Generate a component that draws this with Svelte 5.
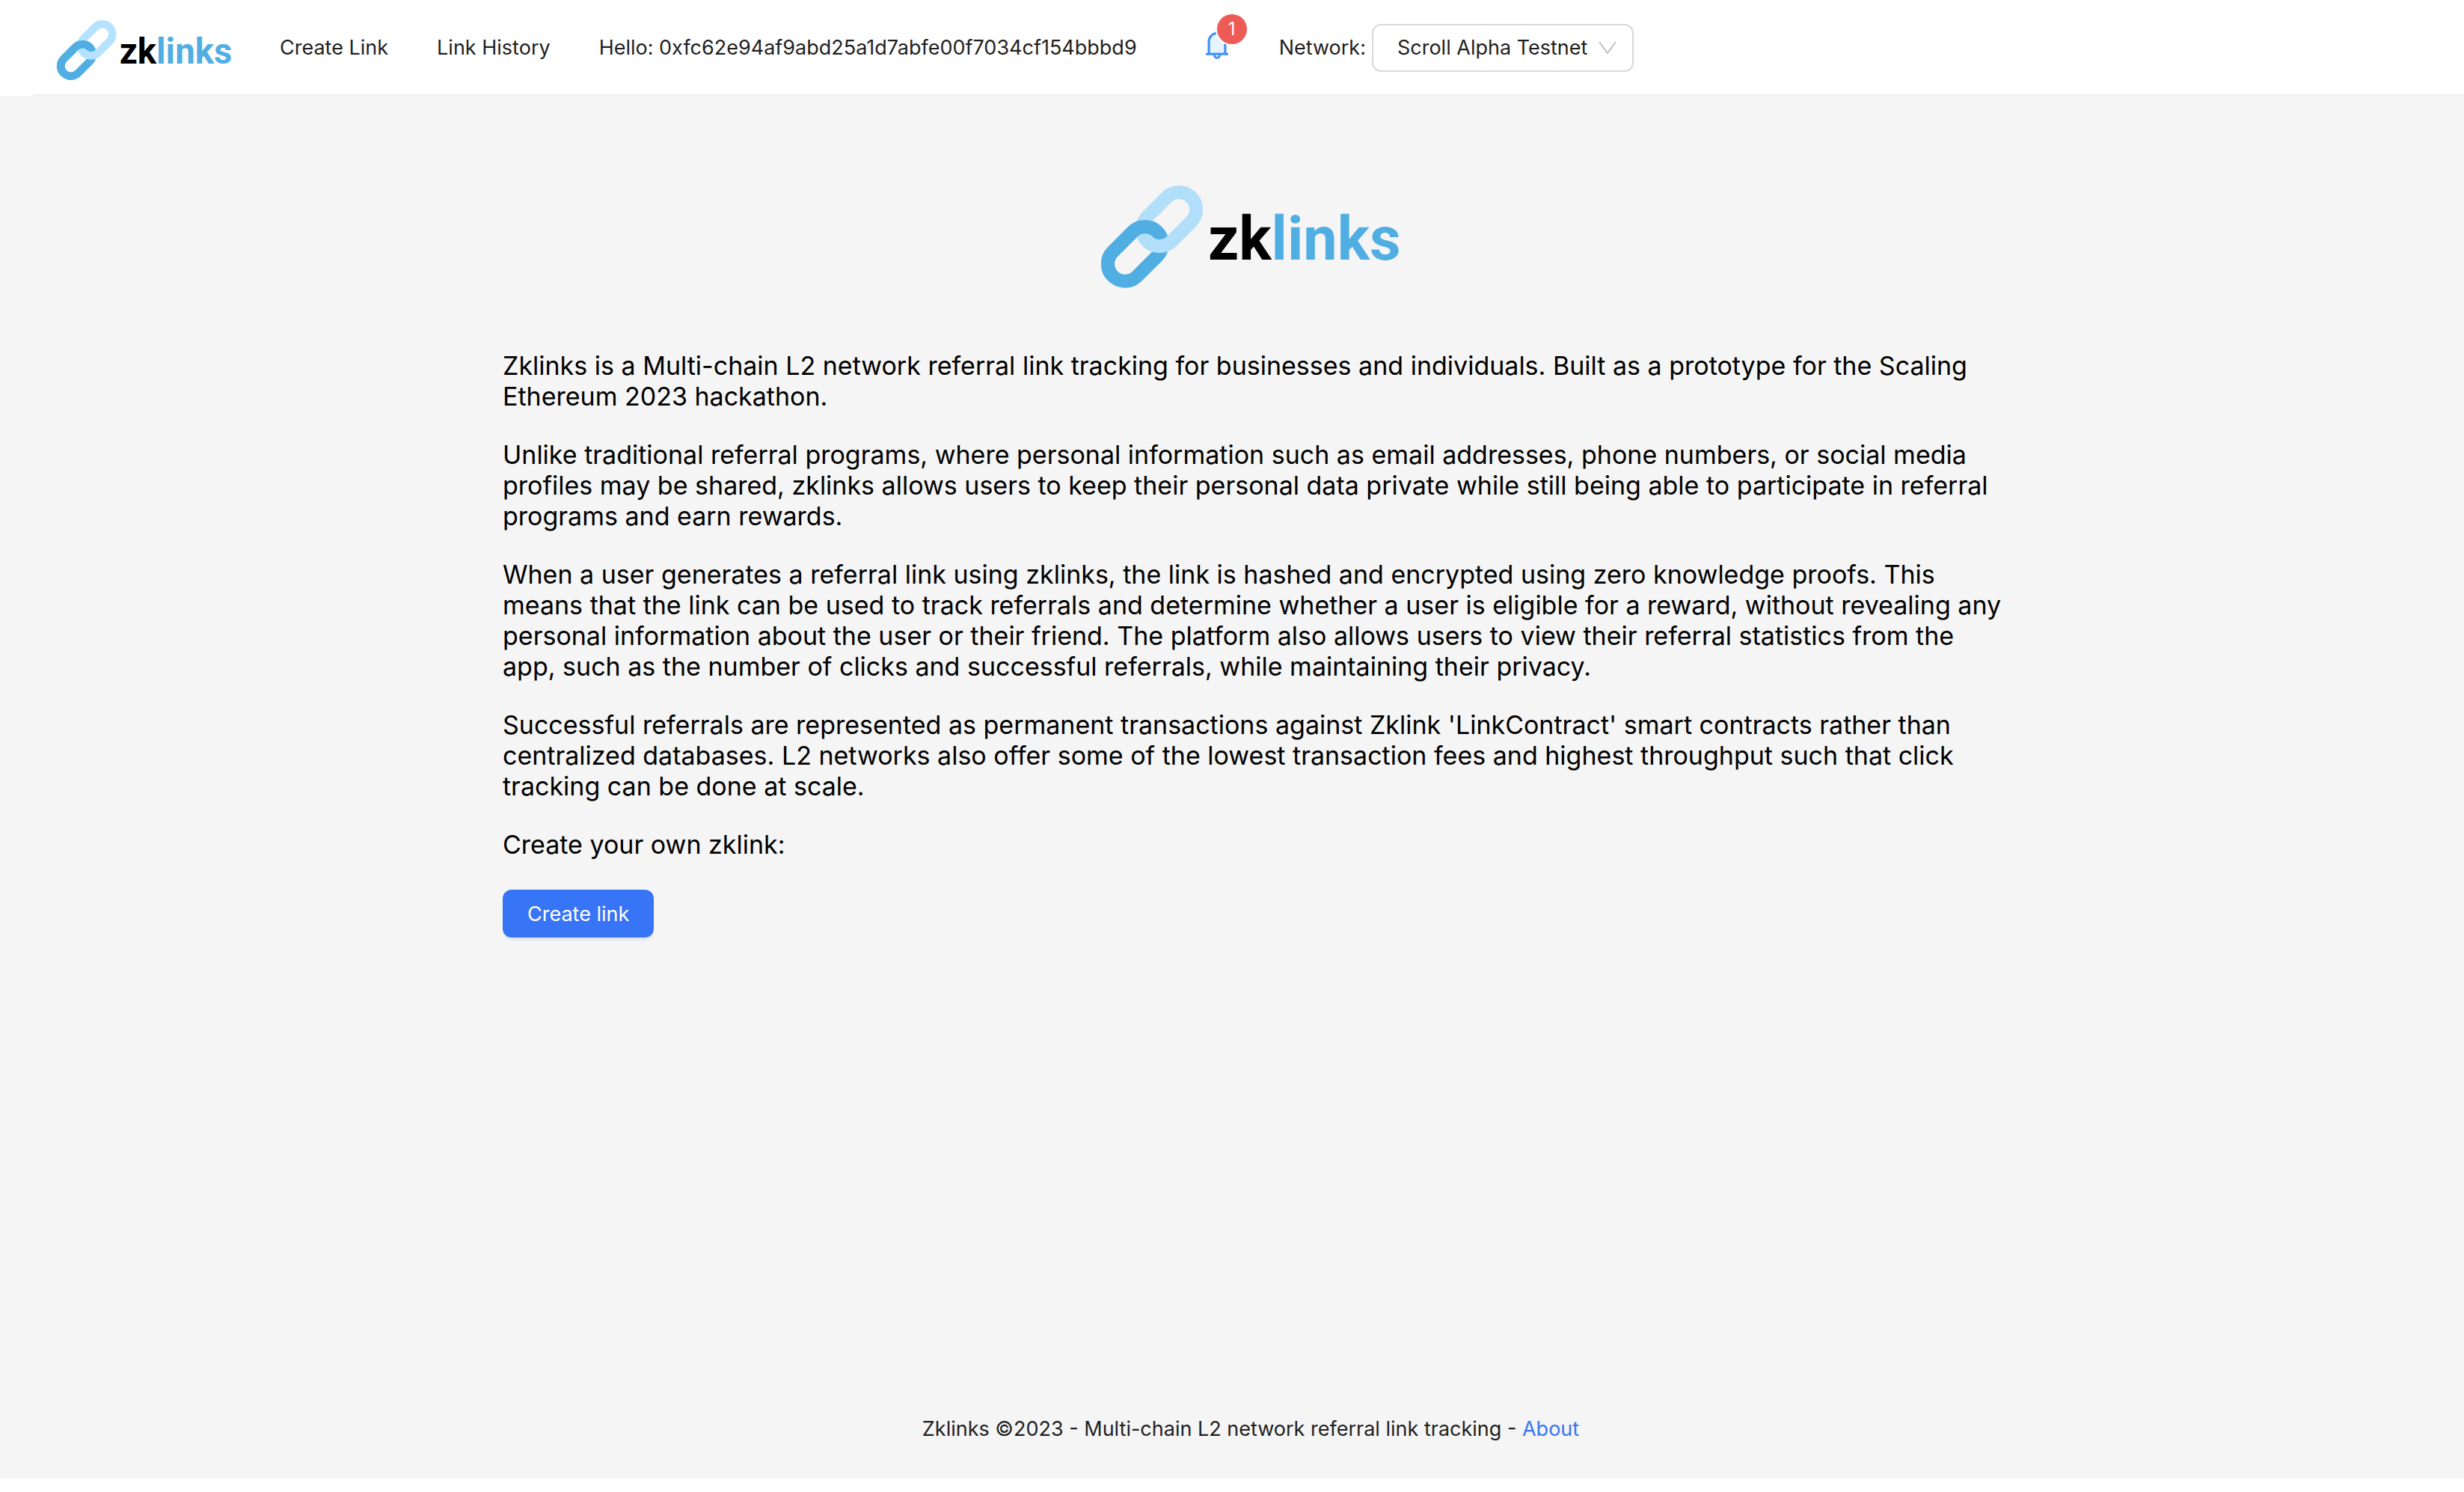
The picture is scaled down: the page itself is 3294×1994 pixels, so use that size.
<script>
  const networks = ['Scroll Alpha Testnet', 'Polygon zkEVM Testnet', 'Mantle Testnet'];
  let network = $state(networks[0]);

  const account = '0xfc62e94af9abd25a1d7abfe00f7034cf154bbbd9';

  const paragraphs = [
    'Zklinks is a Multi-chain L2 network referral link tracking for businesses and individuals. Built as a prototype for the Scaling Ethereum 2023 hackathon.',
    'Unlike traditional referral programs, where personal information such as email addresses, phone numbers, or social media profiles may be shared, zklinks allows users to keep their personal data private while still being able to participate in referral programs and earn rewards.',
    'When a user generates a referral link using zklinks, the link is hashed and encrypted using zero knowledge proofs. This means that the link can be used to track referrals and determine whether a user is eligible for a reward, without revealing any personal information about the user or their friend. The platform also allows users to view their referral statistics from the app, such as the number of clicks and successful referrals, while maintaining their privacy.',
    "Successful referrals are represented as permanent transactions against Zklink 'LinkContract' smart contracts rather than centralized databases. L2 networks also offer some of the lowest transaction fees and highest throughput such that click tracking can be done at scale.",
    'Create your own zklink:'
  ];
</script>

{#snippet logo(id)}
  <svg class="logo" viewBox="0 0 400 138" role="img" aria-label="zklinks">
    <defs>
      <clipPath id="over-{id}"><path d="M0 0H136L0 136Z" /></clipPath>
    </defs>
    <g fill="none" stroke-width="18">
      <path class="dark" d="M15.7 88.4L42.4 61.7A23 23 0 0 1 75 94.3L48.3 121A23 23 0 0 1 15.7 88.4Z" />
      <path class="light" d="M61.7 41.7L87.7 15.7A23 23 0 0 1 120.3 48.3L94.3 74.3A23 23 0 0 1 61.7 41.7Z" />
      <path class="dark" clip-path="url(#over-{id})" d="M15.7 88.4L42.4 61.7A23 23 0 0 1 75 94.3L48.3 121A23 23 0 0 1 15.7 88.4Z" />
    </g>
    <text x="143" y="99"><tspan class="zk">zk</tspan><tspan class="links">links</tspan></text>
  </svg>
{/snippet}

<div class="layout">
  <header>
    <a class="brand" href="#home">{@render logo('nav')}</a>
    <nav>
      <a href="#create">Create Link</a>
      <a href="#history">Link History</a>
      <span>Hello: {account}</span>
    </nav>
    <button class="bell" aria-label="Notifications">
      <svg viewBox="64 64 896 896" aria-hidden="true">
        <path class="bell-fill" d="M512 220c-55.6 0-107.8 21.6-147.1 60.9S304 372.4 304 428v340h416V428c0-55.6-21.6-107.8-60.9-147.1S567.6 220 512 220z" />
        <path class="bell-line" d="M816 768h-24V428c0-141.1-104.3-257.7-240-277.1V112c0-22.1-17.9-40-40-40s-40 17.9-40 40v38.9c-135.7 19.4-240 136-240 277.1v340h-24c-17.7 0-32 14.3-32 32v32c0 4.4 3.6 8 8 8h216c0 61.8 50.2 112 112 112s112-50.2 112-112h216c4.4 0 8-3.6 8-8v-32c0-17.7-14.3-32-32-32zM512 888c-26.5 0-48-21.5-48-48h96c0 26.5-21.5 48-48 48zm208-120H304V428c0-55.6 21.6-107.8 60.9-147.1S456.4 220 512 220c55.6 0 107.8 21.6 147.1 60.9S720 372.4 720 428v340z" />
      </svg>
      <span class="badge">1</span>
    </button>
    <div class="network">
      <label for="network">Network:</label>
      <div class="select">
        <select id="network" bind:value={network}>
          {#each networks as name}
            <option>{name}</option>
          {/each}
        </select>
        <svg class="chevron" viewBox="0 0 24 16" aria-hidden="true"><path d="M1 0L12 15L23 0" /></svg>
      </div>
    </div>
  </header>

  <main>
    <div class="hero">{@render logo('hero')}</div>
    {#each paragraphs as text}
      <p>{text}</p>
    {/each}
    <button class="primary">Create link</button>
  </main>

  <footer>
    Zklinks ©2023 - Multi-chain L2 network referral link tracking - <a href="#about">About</a>
  </footer>
</div>

<style>
  :global(body) {
    margin: 0;
    background: #fff;
  }

  .layout {
    display: flex;
    flex-direction: column;
    min-height: calc(100vh - 18px);
    background: #f5f5f5;
    color: #1f1f1f;
    font: 27px/44px Inter, 'Liberation Sans', sans-serif;
  }

  a {
    color: inherit;
    text-decoration: none;
  }

  button {
    font: inherit;
    cursor: pointer;
  }

  header {
    display: flex;
    align-items: center;
    height: 128px;
    padding-left: 76px;
    box-sizing: border-box;
    background: linear-gradient(#f0f0f0, #f0f0f0) 44px 100% / 100% 2px no-repeat #fff;
  }

  .brand {
    display: flex;
    width: 234px;
    margin-right: 64px;
    padding-top: 6px;
  }

  .logo {
    display: block;
    width: 100%;
    overflow: visible;
  }

  .logo text {
    font: 700 81px Roboto, 'Liberation Sans', sans-serif;
  }

  .dark {
    stroke: #50aee3;
  }

  .light {
    stroke: #b1def8;
  }

  .brand .light {
    stroke: #b5e3fe;
  }

  .zk {
    fill: #000;
  }

  .links {
    fill: #50aee3;
  }

  nav {
    display: flex;
    gap: 65px;
    white-space: nowrap;
  }

  .bell {
    position: relative;
    display: flex;
    margin: 0 63px 10px 87px;
    padding: 0;
    border: 0;
    background: none;
  }

  .bell svg {
    width: 40px;
    height: 40px;
  }

  .bell-fill {
    fill: #e6f4ff;
  }

  .bell-line {
    fill: #4091f7;
  }

  .badge {
    position: absolute;
    top: -20px;
    right: -20px;
    width: 40px;
    height: 40px;
    border-radius: 50%;
    background: #ec5b56;
    box-shadow: 0 0 0 2px #fff;
    color: #fff;
    font-size: 24px;
    line-height: 40px;
    text-align: center;
  }

  .network {
    display: flex;
    align-items: center;
    gap: 8px;
  }

  .select {
    position: relative;
    display: flex;
    align-items: center;
  }

  select {
    width: 350px;
    height: 64px;
    padding: 0 32px;
    border: 2px solid #d9d9d9;
    border-radius: 12px;
    background: #fff;
    color: inherit;
    font: inherit;
    appearance: none;
  }

  .chevron {
    position: absolute;
    right: 23px;
    width: 24px;
    height: 16px;
    pointer-events: none;
  }

  .chevron path {
    fill: none;
    stroke: #bfbfbf;
    stroke-width: 2;
  }

  main {
    flex: 1;
    width: 2000px;
    max-width: calc(100% - 100px);
    margin-left: 50px;
    padding-top: 120px;
    align-self: center;
    box-sizing: border-box;
    color: #000;
    font-size: 34px;
    line-height: 41px;
  }

  .hero {
    width: 400px;
    margin: 0 auto 82px;
  }

  p {
    margin: 0 -10px 37px 0;
  }

  .primary {
    display: block;
    height: 64px;
    margin-top: 40px;
    padding: 0 33px;
    border: 0;
    border-radius: 12px;
    background: #3875f6;
    box-shadow: 0 4px 0 #e3eaf5;
    color: #fff;
    font-size: 27px;
  }

  footer {
    padding: 44px 0 44px 50px;
    text-align: center;
  }

  footer a {
    color: #3875f6;
  }
</style>
